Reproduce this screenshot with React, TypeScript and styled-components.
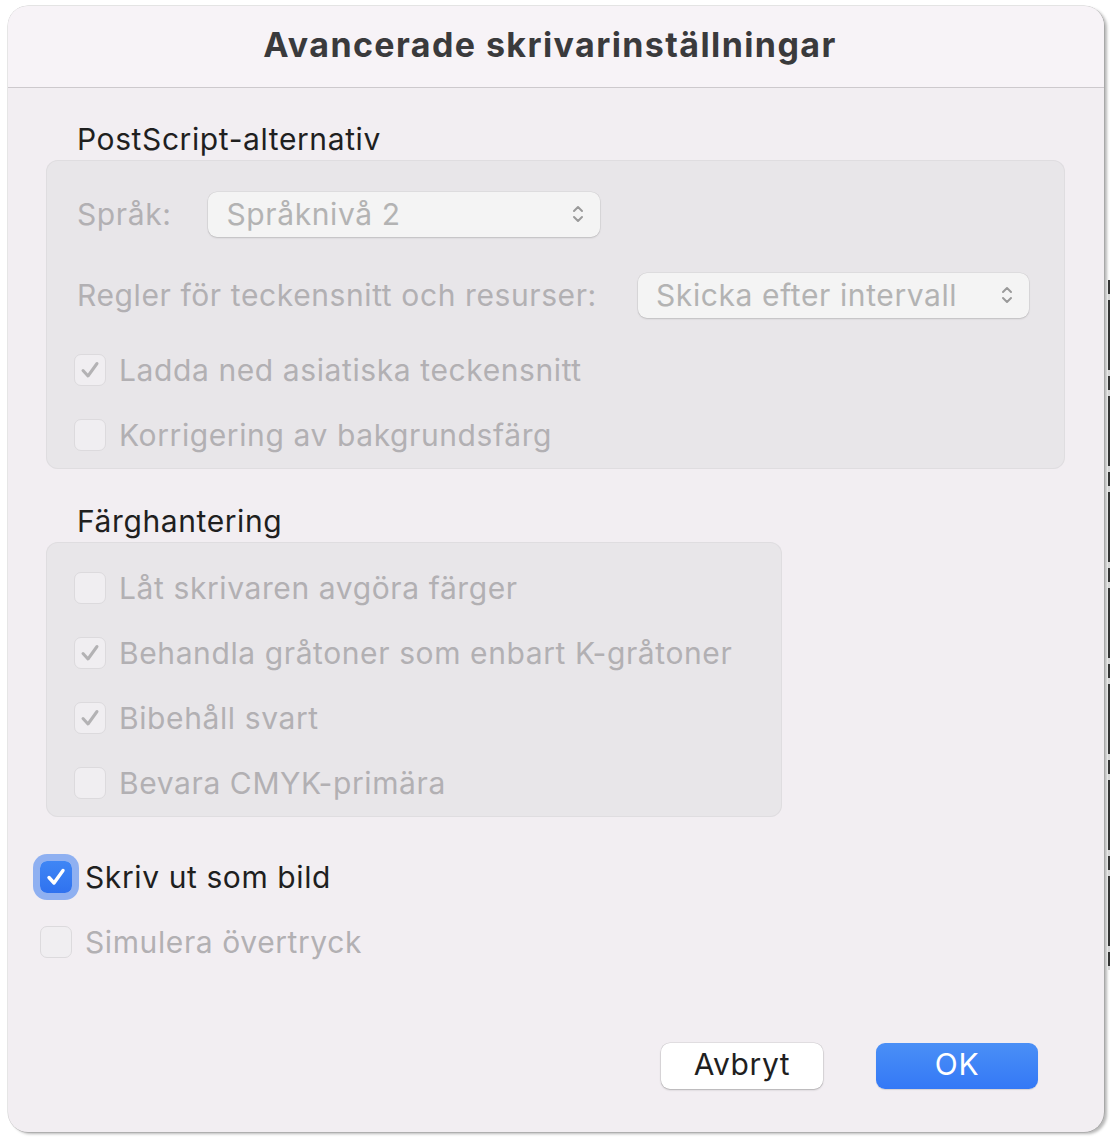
import React from "react";
import styled, { createGlobalStyle } from "styled-components";

const Global = createGlobalStyle`
  html, body { margin: 0; padding: 0; background: #ffffff; }
  body { font-family: Inter, "Noto Sans", "Liberation Sans", sans-serif; }
`;

const Page = styled.div`
  padding: 6px 0 0 8px;
  width: 1116px;
  height: 1138px;
  box-sizing: border-box;
  position: relative;
`;

const Window = styled.div`
  width: 1096px;
  height: 1126px;
  border-radius: 20px;
  background: #f2eef2;
  box-shadow: 3px 2px 3px rgba(0, 0, 0, 0.28), 0 0 0 0.5px rgba(0, 0, 0, 0.2);
  display: flex;
  flex-direction: column;
  overflow: hidden;
`;

const TitleBar = styled.div`
  height: 82px;
  flex: none;
  background: #f7f3f7;
  border-bottom: 1px solid #cdc9cd;
  display: flex;
  align-items: center;
  justify-content: center;
  box-sizing: border-box;
`;

const Title = styled.h1`
  margin: 0;
  font-size: 34px;
  font-weight: 700;
  color: #3a3a3c;
  letter-spacing: 1.4px;
  transform: translateX(-6px) translateY(-2px);
`;

const Content = styled.div`
  flex: 1;
  display: flex;
  flex-direction: column;
  padding: 0 0 0 38px;
`;

const SectionHeader = styled.div<{ $top: number }>`
  margin: ${(p) => p.$top}px 0 4px 31px;
  height: 34px;
  line-height: 34px;
  font-size: 30px;
  letter-spacing: 0.6px;
  color: #1f1f1f;
`;

const GroupBox = styled.div<{ $width: number; $padTop: number }>`
  width: ${(p) => p.$width}px;
  box-sizing: border-box;
  background: #e8e6e9;
  border-radius: 12px;
  box-shadow: inset 0 0 0 1px #dfdde0;
  padding: ${(p) => p.$padTop}px 36px 14px 28px;
  display: flex;
  flex-direction: column;
`;

const PopupRow = styled.div<{ $top: number; $start?: boolean }>`
  margin-top: ${(p) => p.$top}px;
  height: 46px;
  display: flex;
  align-items: center;
  justify-content: ${(p) => (p.$start ? "flex-start" : "space-between")};
  gap: 37px;
`;

const Label = styled.span`
  font-size: 30px;
  letter-spacing: 0.6px;
  color: #b2b0b3;
  margin-left: 3px;
`;

const Popup = styled.div<{ $width: number }>`
  width: ${(p) => p.$width}px;
  height: 45px;
  box-sizing: border-box;
  border-radius: 9px;
  background: #f4f4f4;
  box-shadow: 0 1px 2px rgba(0, 0, 0, 0.14), 0 0 0 0.5px rgba(0, 0, 0, 0.08);
  display: flex;
  align-items: center;
  justify-content: space-between;
  padding: 0 15px 0 18px;
  font-size: 30px;
  letter-spacing: 0.6px;
  color: #b3b3b3;
`;

const CheckRow = styled.label<{ $top: number; $indent?: number }>`
  margin-top: ${(p) => p.$top}px;
  height: 40px;
  display: flex;
  align-items: center;
  gap: 13px;
  margin-left: ${(p) => p.$indent ?? 0}px;
`;

const Box = styled.span<{ $active?: boolean }>`
  width: 32px;
  height: 32px;
  flex: none;
  box-sizing: border-box;
  border-radius: 7px;
  display: flex;
  align-items: center;
  justify-content: center;
  background: ${(p) => (p.$active ? "linear-gradient(#3f86f5, #2f72ef)" : "#f0eef1")};
  border: ${(p) => (p.$active ? "none" : "1px solid #dcdadd")};
  box-shadow: ${(p) => (p.$active ? "0 0 0 7px rgba(110, 155, 240, 0.75)" : "none")};
`;

const CheckText = styled.span<{ $dim?: boolean }>`
  font-size: 30px;
  letter-spacing: 0.6px;
  color: ${(p) => (p.$dim ? "#b2b0b3" : "#1f1f1f")};
`;

const Spacer = styled.div`
  flex: 1;
`;

const Footer = styled.div`
  display: flex;
  justify-content: flex-end;
  gap: 53px;
  padding: 0 66px 43px 0;
`;

const Button = styled.button<{ $primary?: boolean }>`
  width: 162px;
  height: 46px;
  border-radius: 9px;
  border: none;
  font-family: inherit;
  font-size: 30px;
  letter-spacing: 0.6px;
  color: ${(p) => (p.$primary ? "#ffffff" : "#1f1f1f")};
  background: ${(p) => (p.$primary ? "linear-gradient(#4a8ff6, #3478f6)" : "#ffffff")};
  box-shadow: ${(p) =>
    p.$primary
      ? "0 1px 1px rgba(0,0,0,0.12)"
      : "0 1px 2px rgba(0,0,0,0.22), 0 0 0 0.5px rgba(0,0,0,0.12)"};
  padding: 0 0 4px;
`;

const EdgeLine = styled.div`
  position: absolute;
  left: 1108px;
  top: 280px;
  width: 2px;
  height: 690px;
  background: repeating-linear-gradient(#111 0 14px, #cfcfcf 14px 20px, #111 20px 90px, #cfcfcf 90px 96px);
  opacity: 0.85;
`;

const Chevrons = () => (
  <svg width="14" height="22" viewBox="0 0 14 22" fill="none">
    <path d="M3 8 L7 4 L11 8" stroke="#9a9a9a" strokeWidth="2" strokeLinecap="round" strokeLinejoin="round" />
    <path d="M3 14 L7 18 L11 14" stroke="#9a9a9a" strokeWidth="2" strokeLinecap="round" strokeLinejoin="round" />
  </svg>
);

const Tick = ({ color, width = 3 }: { color: string; width?: number }) => (
  <svg width="22" height="22" viewBox="0 0 22 22" fill="none">
    <path d="M4 11.5 L9 17 L18 4.5" stroke={color} strokeWidth={width} strokeLinecap="round" strokeLinejoin="round" />
  </svg>
);

const Check = ({
  label,
  checked,
  active,
  top,
  indent,
}: {
  label: string;
  checked?: boolean;
  active?: boolean;
  top: number;
  indent?: number;
}) => (
  <CheckRow $top={top} $indent={indent}>
    <Box $active={active}>
      {checked && <Tick color={active ? "#ffffff" : "#b3b2b4"} width={active ? 3.4 : 3} />}
    </Box>
    <CheckText $dim={!active}>{label}</CheckText>
  </CheckRow>
);

export default function App() {
  return (
    <Page>
      <Global />
      <Window>
        <TitleBar>
          <Title>Avancerade skrivarinställningar</Title>
        </TitleBar>
        <Content>
          <SectionHeader $top={34}>PostScript-alternativ</SectionHeader>
          <GroupBox $width={1019} $padTop={0}>
            <PopupRow $top={31} $start>
              <Label>Språk:</Label>
              <Popup $width={392}>
                <span>Språknivå 2</span>
                <Chevrons />
              </Popup>
            </PopupRow>
            <PopupRow $top={35}>
              <Label>Regler för teckensnitt och resurser:</Label>
              <Popup $width={391}>
                <span>Skicka efter intervall</span>
                <Chevrons />
              </Popup>
            </PopupRow>
            <Check label="Ladda ned asiatiska teckensnitt" checked top={32} />
            <Check label="Korrigering av bakgrundsfärg" top={25} />
          </GroupBox>
          <SectionHeader $top={35}>Färghantering</SectionHeader>
          <GroupBox $width={736} $padTop={26}>
            <Check label="Låt skrivaren avgöra färger" top={0} />
            <Check label="Behandla gråtoner som enbart K-gråtoner" checked top={25} />
            <Check label="Bibehåll svart" checked top={25} />
            <Check label="Bevara CMYK-primära" top={25} />
          </GroupBox>
          <Check label="Skriv ut som bild" checked active top={40} indent={-6} />
          <Check label="Simulera övertryck" top={25} indent={-6} />
          <Spacer />
        </Content>
        <Footer>
          <Button>Avbryt</Button>
          <Button $primary>OK</Button>
        </Footer>
      </Window>
      <EdgeLine />
    </Page>
  );
}
